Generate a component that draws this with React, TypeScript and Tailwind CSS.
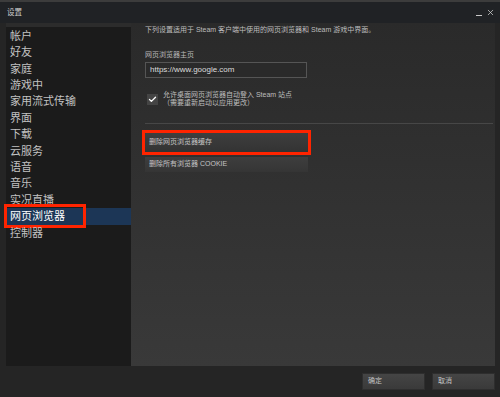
import { Check, X } from "lucide-react";

const navItems = [
  "帐户",
  "好友",
  "家庭",
  "游戏中",
  "家用流式传输",
  "界面",
  "下载",
  "云服务",
  "语音",
  "音乐",
  "实况直播",
  "网页浏览器",
  "控制器",
];

const font = "font-['Liberation_Sans','Noto_Sans_CJK_SC',sans-serif]";

function FooterButton({ label }: { label: string }) {
  return (
    <button className="w-[63px] h-[17px] flex items-center pl-[5px] text-[7px] text-[#c4c4c4] bg-gradient-to-b from-[#454545] to-[#3a3a3a] border border-[#2e2e2e]">
      {label}
    </button>
  );
}

export default function App() {
  return (
    <div className={`w-[500px] h-[397px] bg-[#252525] flex flex-col overflow-hidden ${font}`}>
      {/* title bar */}
      <div className="h-[2px] bg-[#3c3c3c]" />
      <div className="h-[21px] bg-[#202225] flex items-center justify-between pl-[7px] pr-[5px]">
        <span className="text-[7.5px] text-[#cfcfcf]">设置</span>
        <div className="flex items-center gap-[4px] text-[#d0d0d0]">
          <span className="w-[6px] h-[1.5px] bg-[#c8c8c8] mt-[6px]" />
          <X size={9} strokeWidth={2} />
        </div>
      </div>

      <div className="flex pl-[6px]">
        {/* left nav */}
        <div className="w-[125px] h-[343px] bg-[#1b1b1b] flex flex-col">
          <div className="h-[4px] bg-[#2c2c2c] mb-[1px]" />
          {navItems.map((item) => {
            const active = item === "网页浏览器";
            return (
              <div
                key={item}
                className={`relative h-[16.42px] flex items-center pl-[4px] text-[11px] leading-none ${
                  active ? "bg-[#1c3656] text-white" : "text-[#c2c2c2]"
                }`}
              >
                {item}
                {active && (
                  <span className="absolute left-[-2px] top-[-4px] w-[82px] h-[24px] border-[3px] border-[#ff2400]" />
                )}
              </div>
            );
          })}
        </div>

        {/* right panel */}
        <div className="w-[364px] h-[343px] bg-gradient-to-b from-[#2a2a2a] to-[#393939] pl-[14px] pr-[2px] pt-[2px] flex flex-col">
          <p className="text-[7px] text-[#bdbdbd] leading-[10px]">
            下列设置适用于 Steam 客户端中使用的网页浏览器和 Steam 游戏中界面。
          </p>
          <p className="mt-[15px] text-[7px] text-[#b8b8b8] leading-[10px]">网页浏览器主页</p>
          <div className="mt-[2px] w-[162px] h-[16px] border border-[#555] bg-[#2a2a2a] flex items-center pl-[4px] text-[8px] text-[#dcdcdc]">
            https://www.google.com
          </div>
          <div className="mt-[13px] flex items-start gap-[5px] pl-[2px]">
            <span className="mt-[3px] w-[11px] h-[11px] bg-[#444] flex items-center justify-center text-white">
              <Check size={9} strokeWidth={3.5} />
            </span>
            <div className="text-[7px] leading-[8px] text-[#bdbdbd]">
              <div>允许桌面网页浏览器自动登入 Steam 站点</div>
              <div>（需要重新启动以应用更改）</div>
            </div>
          </div>
          <div className="mt-[16px] h-px bg-[#474747]" />
          <div className="relative mt-[9px] w-[163px] h-[19px] bg-gradient-to-b from-[#3e3e3e] to-[#333] flex items-center pl-[4px] text-[7px] text-[#c4c4c4]">
            删除网页浏览器缓存
            <span className="absolute left-[-3px] top-[-3px] w-[169px] h-[25px] border-[3px] border-[#ff2400]" />
          </div>
          <div className="mt-[5px] w-[163px] h-[15px] bg-gradient-to-b from-[#3e3e3e] to-[#353535] flex items-center pl-[4px] text-[7px] text-[#c4c4c4]">
            删除所有浏览器 COOKIE
          </div>
        </div>
      </div>

      {/* footer */}
      <div className="flex justify-end gap-[7px] pr-[5px] pt-[7px]">
        <FooterButton label="确定" />
        <FooterButton label="取消" />
      </div>
    </div>
  );
}
